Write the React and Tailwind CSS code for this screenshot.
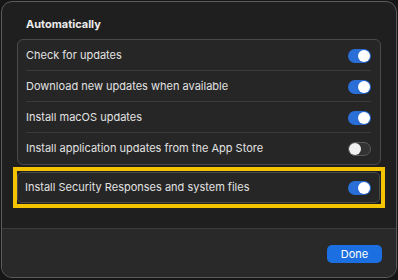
import React from "react";

function Toggle({ on }) {
  return on ? (
    <div className="w-[23px] h-[14px] rounded-full bg-[#2a6fd8] flex items-center justify-end pr-[1px]">
      <div className="w-[12px] h-[12px] rounded-full bg-white shadow-sm" />
    </div>
  ) : (
    <div className="w-[23px] h-[14px] rounded-full bg-[#333333] border border-[#5a5a5a] flex items-center pl-[0px]">
      <div className="w-[12px] h-[12px] rounded-full bg-[#f0f0f0]" />
    </div>
  );
}

function Row({ label, on, last }) {
  return (
    <div className="relative h-[31px] flex items-center justify-between pl-[8px] pr-[9px]">
      <span className="text-[11px] text-[#e2e2e2]">{label}</span>
      <Toggle on={on} />
      {!last && <div className="absolute left-[8px] right-[9px] bottom-0 h-px bg-[#3a3a3a]" />}
    </div>
  );
}

export default function App() {
  return (
    <div className="w-[398px] h-[280px] bg-[#161616] p-px" style={{ fontFamily: "Inter, 'Noto Sans', sans-serif" }}>
      <div className="w-[396px] h-[277px] rounded-[11px] border border-[#5c5c5c] bg-[#1f1f1f] overflow-hidden flex flex-col">
        <div className="flex-1 px-[15px] pt-[15px]">
          <div className="text-[11px] font-bold text-[#ececec] pl-[9px] leading-[14px]">Automatically</div>
          <div className="mt-[8px] rounded-[6px] border border-[#4a4a4a] bg-[#262626]">
            <Row label="Check for updates" on />
            <Row label="Download new updates when available" on />
            <Row label="Install macOS updates" on />
            <Row label="Install application updates from the App Store" on={false} last />
          </div>
          <div className="mt-[2px] -mx-[4px] border-[4px] border-[#f5c400] pr-[1px] py-[1px]">
            <div className="rounded-[5px] border border-[#4a4a4a] bg-[#262626]">
              <div className="h-[29px] flex items-center justify-between pl-[7px] pr-[8px]">
                <span className="text-[11px] text-[#e2e2e2]">Install Security Responses and system files</span>
                <Toggle on />
              </div>
            </div>
          </div>
        </div>
        <div className="h-[49px] border-t border-[#3c3c3c] bg-[#292929] flex items-start justify-end pr-[14px] pt-[16px]">
          <button className="w-[55px] h-[18px] rounded-[5px] bg-[#1b6fe0] text-white text-[11px] leading-[18px] flex items-center justify-center">
            Done
          </button>
        </div>
      </div>
    </div>
  );
}
